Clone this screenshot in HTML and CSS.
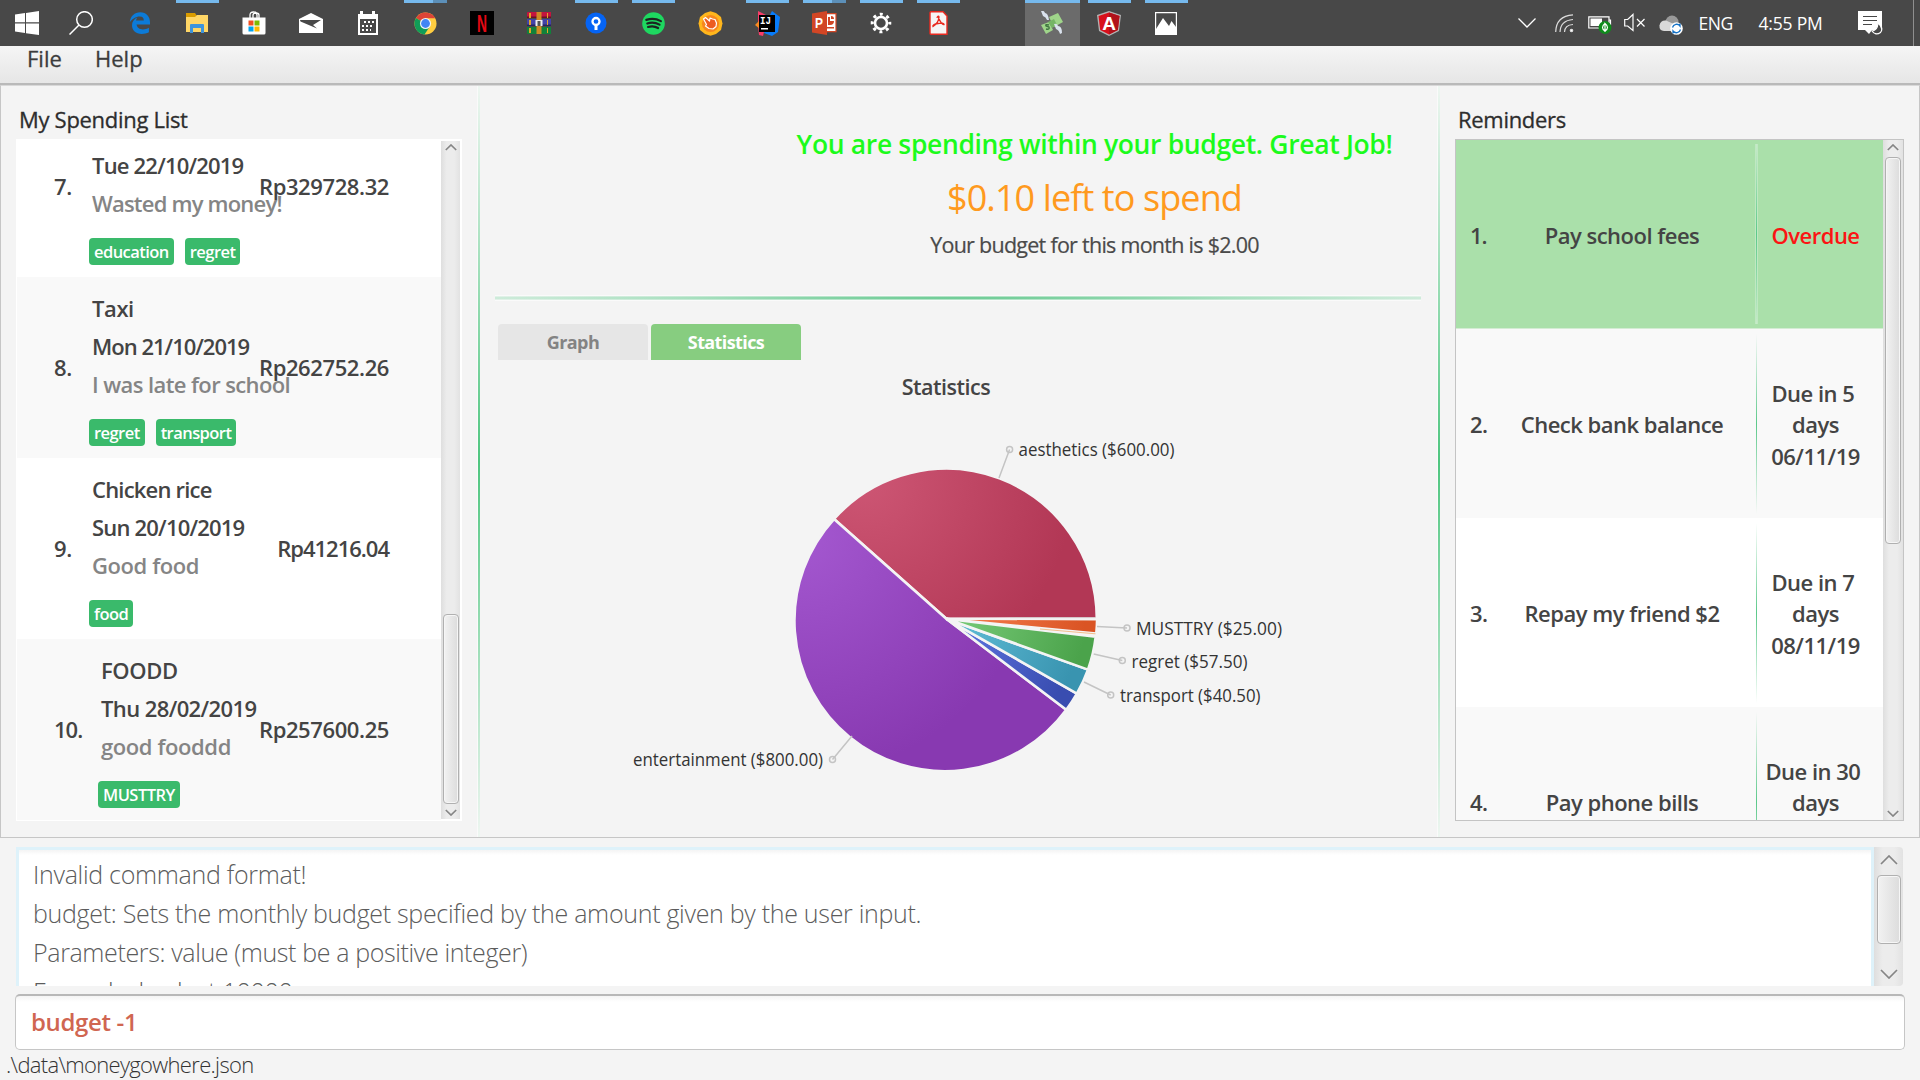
FILE: index.html
```html
<!DOCTYPE html>
<html lang="en">
<head>
<meta charset="utf-8">
<title>MoneyGoWhere</title>
<link rel="stylesheet" href="styles.css">
</head>
<body>
<header class="taskbar">
  <div class="slot slot-start"><svg width="24" height="24" viewBox="0 0 24 24" fill="#fff"><path d="M0 3.4 10 2v9.3H0zM11 1.900 24 0v11.300H11zM0 12.500h10v9.400L0 20.500zM11 12.500h13V24l-13-1.800z"/></svg></div>
  <div class="slot slot-search"><svg width="24" height="24" viewBox="0 0 24 24" fill="none" stroke="#fff" stroke-width="1.500"><circle cx="15.500" cy="8.500" r="7.800"/><path d="M10 14 .5 23.500"/></svg></div>
  <div class="slot"><svg width="22" height="22" viewBox="0 0 22 22"><path fill="#0c7bd8" d="M.8 10.200C1.500 4 5.500.3 11.300.3c6.200 0 9.700 4.500 9.700 10v2.300H7.600c.3 3.200 3 4.800 6.200 4.800 2.400 0 4.300-.6 6.100-1.700v4.600c-2 1.200-4.600 1.700-7.200 1.700-6 0-9.700-3.500-9.700-8.700 0-3.600 2-6.400 5.300-7.900-.8 1-1.100 2-1.200 3.200h7.700c0-2.600-1.200-4-3.900-4-4.200 0-7.800 2.600-10.100 5.600z"/></svg></div>
  <div class="slot open"><svg width="24" height="24" viewBox="0 0 24 24"><path fill="#d99b00" d="M1 2h9l2 3v4H1z"/><path fill="#ffd666" d="M1 6h9l2-2h11v17H1z"/><path fill="#3d94dc" d="M5 22v-8q0-1 1-1h12q1 0 1 1v8h-3v-5H8v5z"/></svg></div>
  <div class="slot"><svg width="24" height="24" viewBox="0 0 24 24"><path fill="none" stroke="#fff" stroke-width="1.300" d="M8 7V4q0-3 3.500-3T15 4v3M11 7V4q0-2 3-2t3 2v3"/><path fill="#fff" d="M.5 6.500h23V22q0 1.500-1.500 1.500H2Q.5 23.500.5 22z"/><path fill="#f25022" d="M6.500 9.500h5v5h-5z"/><path fill="#7fba00" d="M12.500 9.500h5v5h-5z"/><path fill="#00a4ef" d="M6.500 15.500h5v5h-5z"/><path fill="#ffb900" d="M12.500 15.500h5v5h-5z"/></svg></div>
  <div class="slot"><svg width="24" height="20" viewBox="0 0 24 20"><path fill="#fff" d="M0 6 12 0l12 6v14H0z"/><path fill="#484848" d="M1 7h21l-8 5 4 3.500L1.500 8.500z"/></svg></div>
  <div class="slot"><svg width="22" height="24" viewBox="0 0 22 24"><path fill="#fff" d="M1 3h2V0h3v3h9V0h3v3h3v21H1z"/><path fill="#484848" d="M3 8h16v14H3z"/><path stroke="#fff" stroke-width="2" stroke-dasharray="2 2" d="M7 11h10M5 15h12M5 19h9"/></svg></div>
  <div class="slot open many"><svg width="23" height="23" viewBox="0 0 24 24"><circle cx="12" cy="12" r="11.500" fill="#ffcd40"/><path fill="#dc4437" d="M12 12 2 6.300A11.500 11.500 0 0 1 22.200 6.500H12z"/><path fill="#109d58" d="M2 6.300A11.500 11.500 0 0 0 11 23.500L16.500 15 12 12z"/><circle cx="12" cy="12" r="5.800" fill="#f4f4f4"/><circle cx="12" cy="12" r="4.600" fill="#4285f4"/></svg></div>
  <div class="slot"><svg width="24" height="24" viewBox="0 0 24 24"><path d="M0 0h24v24H0z"/><text x="12" y="20.500" fill="#e50914" class="glyph" font-size="24" text-anchor="middle" textLength="10" lengthAdjust="spacingAndGlyphs">N</text></svg></div>
  <div class="slot"><svg width="24" height="22" viewBox="0 0 24 22"><path fill="#c4143f" d="M0 1q0-1 1-1h23v6H0z"/><path fill="#4343a8" d="M0 7h24v7H0z"/><path fill="#11813a" d="M0 15h24v7H1q-1 0-1-1z"/><path fill="#6b1024" d="M0 4.500h24V6H0z"/><path fill="#26265f" d="M0 12.500h24V14H0z"/><path fill="#e2a528" d="M2 1h2v5H2zM2 8h2v5H2zM2 16h2v5H2zM20 1h1v5h-1zM20 8h1v5h-1zM20 16h1v5h-1z"/><path fill="#d08a24" d="M9.500 0h5v22h-5z"/><path fill="#eee" d="M8.500 8h7v6h-7z"/><path fill="#555" d="M10.500 9h3v5h-3z"/></svg></div>
  <div class="slot open"><svg width="22" height="22" viewBox="0 0 22 22"><circle cx="11" cy="11" r="10.500" fill="#0564f5"/><circle cx="11" cy="9.500" r="3.500" fill="none" stroke="#fff" stroke-width="2.300"/><path fill="#fff" d="M9.500 12h3v6h-3z"/></svg></div>
  <div class="slot open"><svg width="23" height="23" viewBox="0 0 24 24"><circle cx="12" cy="12" r="11.800" fill="#1ed760"/><path fill="none" stroke="#1c2420" stroke-linecap="round" stroke-width="2.300" d="M4.500 8.200Q12.500 5.500 19.700 9.500M5.500 12Q12 9.800 18.300 13.200M6.300 15.600Q12 13.800 16.800 16.700"/></svg></div>
  <div class="slot"><svg width="25" height="25" viewBox="0 0 25 25"><path fill="#ffb61c" d="M12.500.3 18 2l5 4 1.500 6.500L23 19l-5 4-5.500 1.700L7 23l-5-4-1.500-6.500L2 6l5-4z"/><circle cx="12.500" cy="12.500" r="8.600" fill="#f7871e"/><path fill="#ed5c20" stroke="#fff" stroke-width="1.200" stroke-linejoin="round" d="m5.500 8 2-1.500 4 3.500.5-3 2.500 1 2.500.5 1.500 3.500-.5 3.500-3 2.500-4-.5-3.500-2.500 1-1.500z"/></svg></div>
  <div class="slot open"><svg width="25" height="25" viewBox="0 0 25 25"><path fill="#fa3c68" d="m3 0 10 5-5 20-4-1-1-9z"/><path fill="#fa8a20" d="m0 14 5-5v9z"/><path fill="#087cfa" d="m17 0 8 6-2 15-6 4-8-3 6-18z"/><path d="M4 4h16v17H4z"/><text x="5" y="13" class="mono" font-size="11" fill="#fff" textLength="11" lengthAdjust="spacingAndGlyphs">IJ</text><path fill="#fff" d="M6 17h7v1.500H6z"/></svg></div>
  <div class="slot open many"><svg width="25" height="24" viewBox="0 0 25 24"><path fill="#fff" stroke="#d24625" stroke-width="1.200" d="M13 2.600h11v18H13z"/><path fill="#d24625" d="M16 6h2v4h4q0 4-4 4h-2zM19 5q3 0 3 3h-3zM15 16h7v1.500h-7z"/><path fill="#d24625" d="m0 2.500 15-2.500v24L0 21.500z"/><text x="3" y="17" class="glyph" font-size="14" fill="#fff" textLength="8" lengthAdjust="spacingAndGlyphs">P</text></svg></div>
  <div class="slot open"><svg width="22" height="22" viewBox="0 0 22 22" fill="none" stroke="#fff"><circle cx="11" cy="11" r="6" stroke-width="2.600"/><circle cx="11" cy="11" r="8.800" stroke-width="3" stroke-dasharray="3 3.910" stroke-dashoffset="1.500"/></svg></div>
  <div class="slot open"><svg width="19" height="24" viewBox="0 0 19 24"><path fill="#f5f5f5" stroke="#e92a20" stroke-width="1.400" d="M2 .8h12l4 4.200v18.200H2q-1 0-1-1V2q0-1.200 1-1.200z"/><path fill="none" stroke="#e92a20" stroke-width="1.400" d="M8.500 6q1-1.500 1.500 0-.5 6-6 9.500-1-2 5-3t6 1q-2 1-6-7.500z"/></svg></div>
  <div class="slot"></div>
  <div class="slot open active"><svg width="24" height="24" viewBox="0 0 24 24"><path fill="#9fd58a" d="m9 6 9-4 5 9-9 5zM1 14l8-3 4 8-7 4z"/><path fill="#76b566" d="m8 11 6-3 3 6-5 3z"/><path fill="#dbe3ee" d="M1 0q3-1 4 2 3 0 4 7L7 9Q6 6 3 5zM14 13q3-1 4 2 4 0 4 7l-2 1q-1-4-4-5z"/><path fill="none" stroke="#3f7540" stroke-width="1.400" d="M9 14q-4-1-3 1l3 1q1 3-3 2"/></svg></div>
  <div class="slot open"><svg width="24" height="25" viewBox="0 0 24 25"><path fill="#b3b3b3" d="M12 0 24 4l-2 16-10 5L2 20 0 4z"/><path fill="#d8101c" d="m12 1.500 10.500 3.600-1.700 14L12 23.500l-8.800-4.400-1.700-14z"/><path fill="#b0121b" d="m12 1.500 10.500 3.600-1.700 14L12 23.500z"/><text x="12" y="18.500" class="glyph" font-size="19" fill="#fff" text-anchor="middle">A</text></svg></div>
  <div class="slot open"><svg width="22" height="23" viewBox="0 0 22 23"><path fill="none" stroke="#fff" stroke-width="1.200" d="M.6.6h20.800v21.800H.6z"/><path fill="#fff" d="M1 17 8 6l6 8 2.500-5L21 15v7H1z"/></svg></div>
  <div class="tray">
    <svg class="tray-more" width="18" height="10" viewBox="0 0 18 10" fill="none" stroke="#fff" stroke-width="1.300"><path d="m.5.5 8.500 8.500L17.500.5"/></svg>
    <svg class="tray-wifi" width="19" height="19" viewBox="0 0 19 19" fill="none" stroke="#ddd" stroke-width="1.200"><path d="M.7 18Q1 2 18 .8M5 18Q5.500 6.500 18 5.500M9.500 18q.3-7 8.500-7.500M13.500 18"/><circle cx="16.500" cy="16.500" r="1.200" fill="#fff"/></svg>
    <svg class="tray-battery" width="24" height="20" viewBox="0 0 24 20"><path fill="none" stroke="#fff" stroke-width="1.200" d="M.8 1.800H21V13H.8zM21 5h1.500v5"/><path fill="#fff" d="M2.500 3.500H14V11H2.500z"/><circle cx="17" cy="12.500" r="6.500" fill="#0f8b1c"/><path fill="none" stroke="#fff" stroke-width="1.200" d="M17 8.500q-5 4 0 7.500 5-3.500 0-7.500v8.500"/></svg>
    <svg class="tray-sound" width="22" height="20" viewBox="0 0 22 20" fill="none" stroke="#fff" stroke-width="1.200"><path d="M.7 6.500h3L9 1.500v16L3.700 13h-3zM13 6l7.500 7.500M20.500 6 13 13.500"/></svg>
    <svg class="tray-cloud" width="25" height="20" viewBox="0 0 25 20"><circle cx="13" cy="7" r="6.500" fill="#999"/><path fill="#d9d9d9" d="M5 16q-5-.500-4.500-5.500Q1.500 5 7 5.500l9 4v6.500z"/><circle cx="17.500" cy="13.500" r="6.300" fill="#fff"/><path fill="none" stroke="#1572c6" stroke-width="1.300" d="M13.500 12.500a4.200 4.200 0 0 1 7.500-1.500v-2.500M21.500 14.500a4.200 4.200 0 0 1-7.500 1.500v2.500"/></svg>
    <span class="tray-lang">ENG</span>
    <span class="tray-time">4:55 PM</span>
    <svg class="tray-note" width="25" height="24" viewBox="0 0 25 24"><path fill="#fff" d="M0 0h24v19H14l-3 4-4-4H0z"/><path stroke="#484848" stroke-width="1.200" d="M5 5.500h14M5 9.500h14M5 13.500h9"/><path fill="#484848" stroke="#fff" stroke-width="1.200" d="M20 12q6 5 2.500 9.500-5 3.500-8.500-1.500 5.500-.5 6-8z"/></svg>
    <span class="tray-edge"></span>
  </div>
</header>

<nav class="menubar"><span class="menu-file">File</span><span class="menu-help">Help</span></nav>

<main class="workspace">
  <section class="spending">
    <h2 class="panel-title spend-title">My Spending List</h2>
    <div class="spend-box">
      <div class="spend-list">
        <article class="spend-row">
          <span class="num">7.</span>
          <div class="details"><p>&nbsp;</p><p class="snug">Tue 22/10/2019</p><p class="remark snug">Wasted my money!</p><div class="tags"><span class="tag">education</span><span class="tag">regret</span></div></div>
          <span class="amount">Rp329728.32</span>
        </article>
        <article class="spend-row alt">
          <span class="num">8.</span>
          <div class="details"><p>Taxi</p><p class="tight">Mon 21/10/2019</p><p class="remark close">I was late for school</p><div class="tags"><span class="tag">regret</span><span class="tag">transport</span></div></div>
          <span class="amount">Rp262752.26</span>
        </article>
        <article class="spend-row">
          <span class="num">9.</span>
          <div class="details"><p class="snug">Chicken rice</p><p class="snug">Sun 20/10/2019</p><p class="remark">Good food</p><div class="tags"><span class="tag">food</span></div></div>
          <span class="amount tight">Rp41216.04</span>
        </article>
        <article class="spend-row alt wide-num">
          <span class="num tight">10.</span>
          <div class="details"><p>FOODD</p><p class="close">Thu 28/02/2019</p><p class="remark">good fooddd</p><div class="tags"><span class="tag">MUSTTRY</span></div></div>
          <span class="amount">Rp257600.25</span>
        </article>
      </div>
      <div class="scrollbar spend-scroll">
        <svg width="12" height="7" viewBox="0 0 12 7"><path d="m.8 6 5.200-5 5.200 5"/></svg>
        <i class="thumb"></i>
        <svg width="12" height="7" viewBox="0 0 12 7"><path d="m.8 1 5.200 5 5.200-5"/></svg>
      </div>
    </div>
  </section>

  <i class="vline"></i>

  <section class="overview">
    <div class="budget">
      <p class="praise">You are spending within your budget. Great Job!</p>
      <p class="left">$0.10 left to spend</p>
      <p class="monthly">Your budget for this month is $2.00</p>
    </div>
    <i class="hline"></i>
    <div class="tabpane">
      <div class="tabs"><span class="tab">Graph</span><span class="tab selected">Statistics</span></div>
      <h3 class="chart-title">Statistics</h3>
      <svg class="pie" width="896" height="430" viewBox="498 404 896 430">
        <defs>
          <radialGradient id="red" gradientUnits="userSpaceOnUse" cx="865" cy="480" r="210"><stop offset="0" stop-color="#cd5674"/><stop offset="1" stop-color="#b23755"/></radialGradient>
          <radialGradient id="purple" gradientUnits="userSpaceOnUse" cx="800" cy="535" r="240"><stop offset="0" stop-color="#a458d0"/><stop offset="1" stop-color="#8839b1"/></radialGradient>
          <linearGradient id="green" gradientUnits="userSpaceOnUse" x1="970" y1="620" x2="1080" y2="655"><stop offset="0" stop-color="#71c571"/><stop offset="1" stop-color="#4ba34b"/></linearGradient>
          <linearGradient id="teal" gradientUnits="userSpaceOnUse" x1="965" y1="625" x2="1070" y2="675"><stop offset="0" stop-color="#5cb8d2"/><stop offset="1" stop-color="#3994b0"/></linearGradient>
          <linearGradient id="blue" gradientUnits="userSpaceOnUse" x1="965" y1="630" x2="1060" y2="690"><stop offset="0" stop-color="#5a70dc"/><stop offset="1" stop-color="#394db0"/></linearGradient>
          <linearGradient id="orange" gradientUnits="userSpaceOnUse" x1="965" y1="620" x2="1085" y2="625"><stop offset="0" stop-color="#f37b4c"/><stop offset="1" stop-color="#da5424"/></linearGradient>
        </defs>
        <g stroke="#f4f4f4" stroke-width="2.600" stroke-linejoin="bevel">
          <path fill="#f9f3ef" d="M946.300 618.800H1096A150 150 0 0 1 1095 637z"/>
          <path fill="url(#red)" d="M946.300 618.800 834 519A150.500 150.500 0 0 1 1096.800 618.300z"/>
          <path fill="url(#purple)" d="M946.300 618.800 1066.300 709.700A150.500 150.500 0 1 1 834 519z"/>
          <path fill="url(#blue)" d="M946.300 618.800 1076.900 693.600A150.500 150.500 0 0 1 1066.300 709.700z"/>
          <path fill="url(#teal)" d="M946.300 618.800 1088 669.600A150.500 150.500 0 0 1 1076.900 693.600z"/>
          <path fill="url(#green)" d="M946.300 618.800 1095.700 636.800A150.500 150.500 0 0 1 1088 669.600z"/>
          <path fill="url(#orange)" d="M946.300 618.800 1096.800 619.500A150.500 150.500 0 0 1 1096 633.300z" stroke-width="2"/>
        </g>
        <path stroke="#efb071" stroke-width=".8" d="m1040 629 55.500 4.800"/><path stroke="#cfc6c6" stroke-width=".8" d="M1010 617.600h85.500"/>
        <g fill="none" stroke="#c4c4c4" stroke-width="1.500">
          <path d="M999 478 1009.600 449.500M1097 626.500 1127 628M1093.700 654 1122.300 660.500M1084 682 1110.700 695M852 736 832.500 759.500"/>
          <circle cx="1009.600" cy="449.500" r="3"/><circle cx="1127" cy="628" r="3"/><circle cx="1122.300" cy="660.500" r="3"/><circle cx="1110.700" cy="695" r="3"/><circle cx="832.500" cy="759.500" r="3"/>
        </g>
        <g class="pie-label">
          <text x="1018.500" y="456" textLength="156" lengthAdjust="spacingAndGlyphs">aesthetics ($600.00)</text>
          <text x="1136" y="635" textLength="146" lengthAdjust="spacingAndGlyphs">MUSTTRY ($25.00)</text>
          <text x="1131.500" y="668" textLength="116" lengthAdjust="spacingAndGlyphs">regret ($57.50)</text>
          <text x="1120" y="702" textLength="140.500" lengthAdjust="spacingAndGlyphs">transport ($40.50)</text>
          <text x="633" y="766" textLength="190" lengthAdjust="spacingAndGlyphs">entertainment ($800.00)</text>
        </g>
      </svg>
    </div>
  </section>

  <i class="vline"></i>

  <section class="reminders">
    <h2 class="panel-title rem-title">Reminders</h2>
    <div class="rem-box">
      <div class="rem-list">
        <article class="rem-row chosen"><span class="num tight">1.</span><span class="what">Pay school fees</span><i class="vline thin"></i><span class="when overdue">Overdue</span></article>
        <article class="rem-row alt"><span class="num">2.</span><span class="what">Check bank balance</span><i class="vline thin"></i><span class="when">Due in 5&nbsp;<br>days<br>06/11/19</span></article>
        <article class="rem-row"><span class="num">3.</span><span class="what">Repay my friend $2</span><i class="vline thin"></i><span class="when">Due in 7&nbsp;<br>days<br>08/11/19</span></article>
        <article class="rem-row alt"><span class="num">4.</span><span class="what">Pay phone bills</span><i class="vline thin"></i><span class="when">Due in 30&nbsp;<br>days<br>&nbsp;</span></article>
      </div>
      <div class="scrollbar rem-scroll">
        <svg width="12" height="7" viewBox="0 0 12 7"><path d="m.8 6 5.200-5 5.200 5"/></svg>
        <i class="thumb"></i>
        <svg width="12" height="7" viewBox="0 0 12 7"><path d="m.8 1 5.200 5 5.200-5"/></svg>
      </div>
    </div>
  </section>
</main>

<section class="result">
  <div class="result-text"><p>Invalid command format!</p><p>budget: Sets the monthly budget specified by the amount given by the user input.</p><p class="params">Parameters: value (must be a positive integer)</p><p>Example: budget 10000</p></div>
  <div class="scrollbar result-scroll">
    <svg width="18" height="10" viewBox="0 0 18 10"><path d="m1 9 8-8 8 8"/></svg>
    <i class="thumb"></i>
    <svg width="18" height="10" viewBox="0 0 18 10"><path d="m1 1 8 8 8-8"/></svg>
  </div>
</section>
<div class="command"><span>budget -1</span></div>
<footer class="status">.\data\moneygowhere.json</footer>
</body>
</html>
```
FILE: styles.css
```css
* { box-sizing: border-box; }
body {
  margin: 0;
  width: 1920px;
  height: 1080px;
  overflow: hidden;
  display: flex;
  flex-direction: column;
  background: #f4f4f4;
  color: #444;
  font-family: "Open Sans", "Noto Sans", sans-serif;
  font-size: 22px;
  font-weight: 600;
}
p, h2, h3 { margin: 0; font-weight: inherit; font-size: inherit; }
svg { display: block; flex: none; }
i { display: block; }
.glyph { font-family: "Liberation Sans", sans-serif; font-weight: 700; }
.mono { font-family: "Liberation Mono", monospace; font-weight: 700; }

/* taskbar */
.taskbar { height: 46px; flex: none; display: flex; background: #484848; color: #fff; }
.slot {
  width: 57px;
  height: 46px;
  display: flex;
  flex: none;
  align-items: center;
  justify-content: center;
}
.slot-start { width: 54px; }
.slot-search { width: 57.5px; padding-right: 3px; }
.slot.open { background: linear-gradient(#76b9ed, #76b9ed) 7px 0 / 43px 3px no-repeat; }
.slot.many { background: linear-gradient(90deg, #76b9ed 29px, #5c8fb8 29px) 7px 0 / 43px 3px no-repeat; }
.slot.active { background: linear-gradient(#76b9ed 3px, #6b6b6b 3px) 1px 0 / 55px 46px no-repeat; }
.tray { flex: 1; display: flex; align-items: center; font-size: 17.5px; font-weight: 400; letter-spacing: -.4px; }
.tray-more { margin-left: 323px; }
.tray-wifi { margin-left: 19px; }
.tray-battery { margin-left: 14px; margin-top: 4px; }
.tray-sound { margin-left: 12px; }
.tray-cloud { margin-left: 13px; margin-top: 4px; }
.tray-lang { margin-left: 15px; width: 36px; }
.tray-time { margin-left: 24px; width: 69px; white-space: nowrap; letter-spacing: -.2px; }
.tray-note { margin-left: 30px; }
.tray-edge { margin-left: auto; margin-right: 6px; width: 1px; height: 46px; background: #8f8f8f; }

/* menu */
.menubar {
  height: 39px;
  flex: none;
  display: flex;
  padding-left: 27px;
  background: linear-gradient(#f5f5f5, #e6e6e6);
  border-bottom: 2px solid #b9b9b9;
  font-weight: 400;
  line-height: 24px;
  color: #3c3c3c;
  -webkit-text-stroke: .3px #3c3c3c;
}
.menu-file { width: 68px; }

/* three panels */
.workspace {
  height: 753px;
  flex: none;
  display: grid;
  grid-template-columns: 476px 3px 957px 3px 479px;
  border: 1px solid #c6c6c6;
  border-top-color: #d8d8d8;
}
.vline {
  width: 3px;
  background: linear-gradient(#eef6f1, #4fc680 50%, #eef6f1);
  border: solid #fafafa;
  border-width: 0 0 0 1px;
}
.panel-title { height: 53px; padding-top: 16px; line-height: 34px; color: #2d2d2d; font-weight: 400; -webkit-text-stroke: .3px #2d2d2d; letter-spacing: -.3px; }
.spend-title, .rem-title { padding-left: 18px; }

.scrollbar {
  display: flex;
  flex-direction: column;
  align-items: center;
  background: linear-gradient(90deg, #dedede, #ececec 30%, #ececec 70%, #e2e2e2);
}
.scrollbar svg { fill: none; stroke: #858585; stroke-width: 1.7; }
.scrollbar svg:last-child { margin-top: auto; }
.thumb {
  width: 16px;
  border: 1px solid #b0b0b0;
  border-radius: 4px;
  background: linear-gradient(90deg, #f2f2f2, #dcdcdc);
  box-shadow: inset 0 0 0 1px #f6f6f6;
}

.spend-box { margin-left: 15px; width: 446px; height: 682px; display: flex; padding: 1px 2px 1px 1px; background: #fff; }
.spend-list { width: 424px; overflow: hidden; display: flex; flex-direction: column; justify-content: flex-end; }
.spend-row { height: 181px; flex: none; display: grid; grid-template-columns: 37px 38px 297px; align-items: center; background: #fff; letter-spacing: -.4px; }
.spend-row.wide-num { grid-template-columns: 37px 47px 288px; }
.spend-row.alt, .rem-row.alt { background: #f9f9f9; }
.spend-row .num { grid-area: 1 / 2; white-space: nowrap; padding-bottom: 2px; }
.details { grid-area: 1 / 3; align-self: start; padding-top: 12px; white-space: nowrap; }
.details p { line-height: 38px; }
.remark { color: #858585; }
.amount { grid-area: 1 / 3; justify-self: end; z-index: 1; padding-bottom: 2px; }
.close { letter-spacing: -.6px; }
.snug { letter-spacing: -.8px; }
.tight { letter-spacing: -1px; }
.tags { display: flex; gap: 11px; margin: 16px 0 0 -3px; }
.tag { height: 27px; padding: 0 5px; border-radius: 4px; background: #3aba6b; color: #fff; font-size: 16.5px; line-height: 27px; letter-spacing: -.55px; }
.spend-scroll { width: 19px; margin: 1px 0; padding: 3px 0; }
.spend-scroll .thumb { margin-top: 463px; height: 190px; }

/* centre */
.overview { display: flex; flex-direction: column; }
.budget { padding: 37px 0 0 272px; text-align: center; white-space: nowrap; }
.praise { font-size: 26.5px; line-height: 43px; color: #1cfb1c; letter-spacing: -.35px; }
.left { font-size: 36px; font-weight: 400; line-height: 64px; color: #ff9a1e; letter-spacing: -.9px; }
.monthly { font-weight: 400; line-height: 34px; margin-top: -2px; color: #4a4a4a; font-size: 21.5px; letter-spacing: -.73px; -webkit-text-stroke: .2px #4a4a4a; }
.hline { height: 6px; margin: 33px 16px 0 15px; border: solid #fafafa; border-width: 1px 0; background: radial-gradient(ellipse at center, #4fc17f, #a9e0c0 45%, #f1f6f3 100%); }
.tabpane { margin: 23px 0 0 18px; width: 896px; }
.tabs { display: flex; gap: 3px; }
.tab { width: 150px; height: 36px; border-radius: 4px 4px 0 0; background: #e6e6e6; color: #838383; font-size: 18px; font-weight: 700; line-height: 36px; text-align: center; letter-spacing: -.6px; }
.tab.selected { background: #87cd80; color: #fff; }
.chart-title { margin-top: 10px; line-height: 34px; text-align: center; font-size: 21.5px; letter-spacing: -.5px; }
.pie-label { font-size: 17.5px; font-weight: 400; fill: #333; }

/* reminders */
.rem-box { margin-left: 15px; width: 449px; height: 682px; display: flex; border: 1px solid #c4c4c4; }
.rem-list { width: 427px; overflow: hidden; display: flex; flex-direction: column; }
.rem-row { height: 189px; flex: none; display: grid; grid-template-columns: 32px 268px 3px 113px; align-items: center; background: #fff; letter-spacing: -.5px; }
.rem-row.chosen { background: #aae0aa; border-bottom: 1px solid #d4ecd4; }
.rem-row .num { padding-left: 14px; white-space: nowrap; }
.what { text-align: center; }
.when { text-align: center; line-height: 31.5px; padding-top: 3px; }
.when.overdue { color: #fb1414; }
.chosen .num, .chosen .what { padding-top: 2px; }
.vline.thin { height: 180px; background: linear-gradient(transparent, #5cc98a 50%, transparent) 0 0 / 1px 100% no-repeat; border: 0; }
.chosen .vline.thin { margin-left: -1px; background: linear-gradient(#c6ebc9, #5cc98a 50%, #c6ebc9) 1px 0 / 1px 100% no-repeat #c0e8c2; }
.rem-scroll { width: 20px; padding: 4px 0 3px; }
.rem-scroll .thumb { margin-top: 6px; height: 387px; }

/* result, command, status */
.result { height: 139px; flex: none; margin: 9px 17px 0 16px; display: flex; }
.result-text {
  width: 1858px;
  overflow: hidden;
  padding: 5px 0 0 14px;
  border: 3px solid #def2fa;
  border-bottom: 0;
  background: linear-gradient(#f4f4f4, #fff 5px);
  color: #5c5c5c;
  font-size: 25px;
  font-weight: 300;
  line-height: 39px;
  white-space: nowrap;
  letter-spacing: -.3px;
}
.result-text .params { letter-spacing: -.37px; }
.result-scroll { width: 29px; padding: 8px 0 7px; border-radius: 0 4px 4px 0; }
.result-scroll .thumb { width: 24px; height: 69px; margin-top: 10px; }
.command {
  height: 56px;
  flex: none;
  margin: 8px 15px 0;
  padding-left: 15px;
  border: 1px solid #c6c6c6;
  border-top: 2px solid #b8b8b8;
  border-radius: 5px;
  background: linear-gradient(#f4f4f4, #fff 6px);
  color: #d06651;
  font-size: 24px;
  line-height: 51px;
  letter-spacing: -.35px;
}
.status { padding-left: 6px; font-size: 22px; font-weight: 300; line-height: 29px; color: #333; letter-spacing: -.68px; }
```
